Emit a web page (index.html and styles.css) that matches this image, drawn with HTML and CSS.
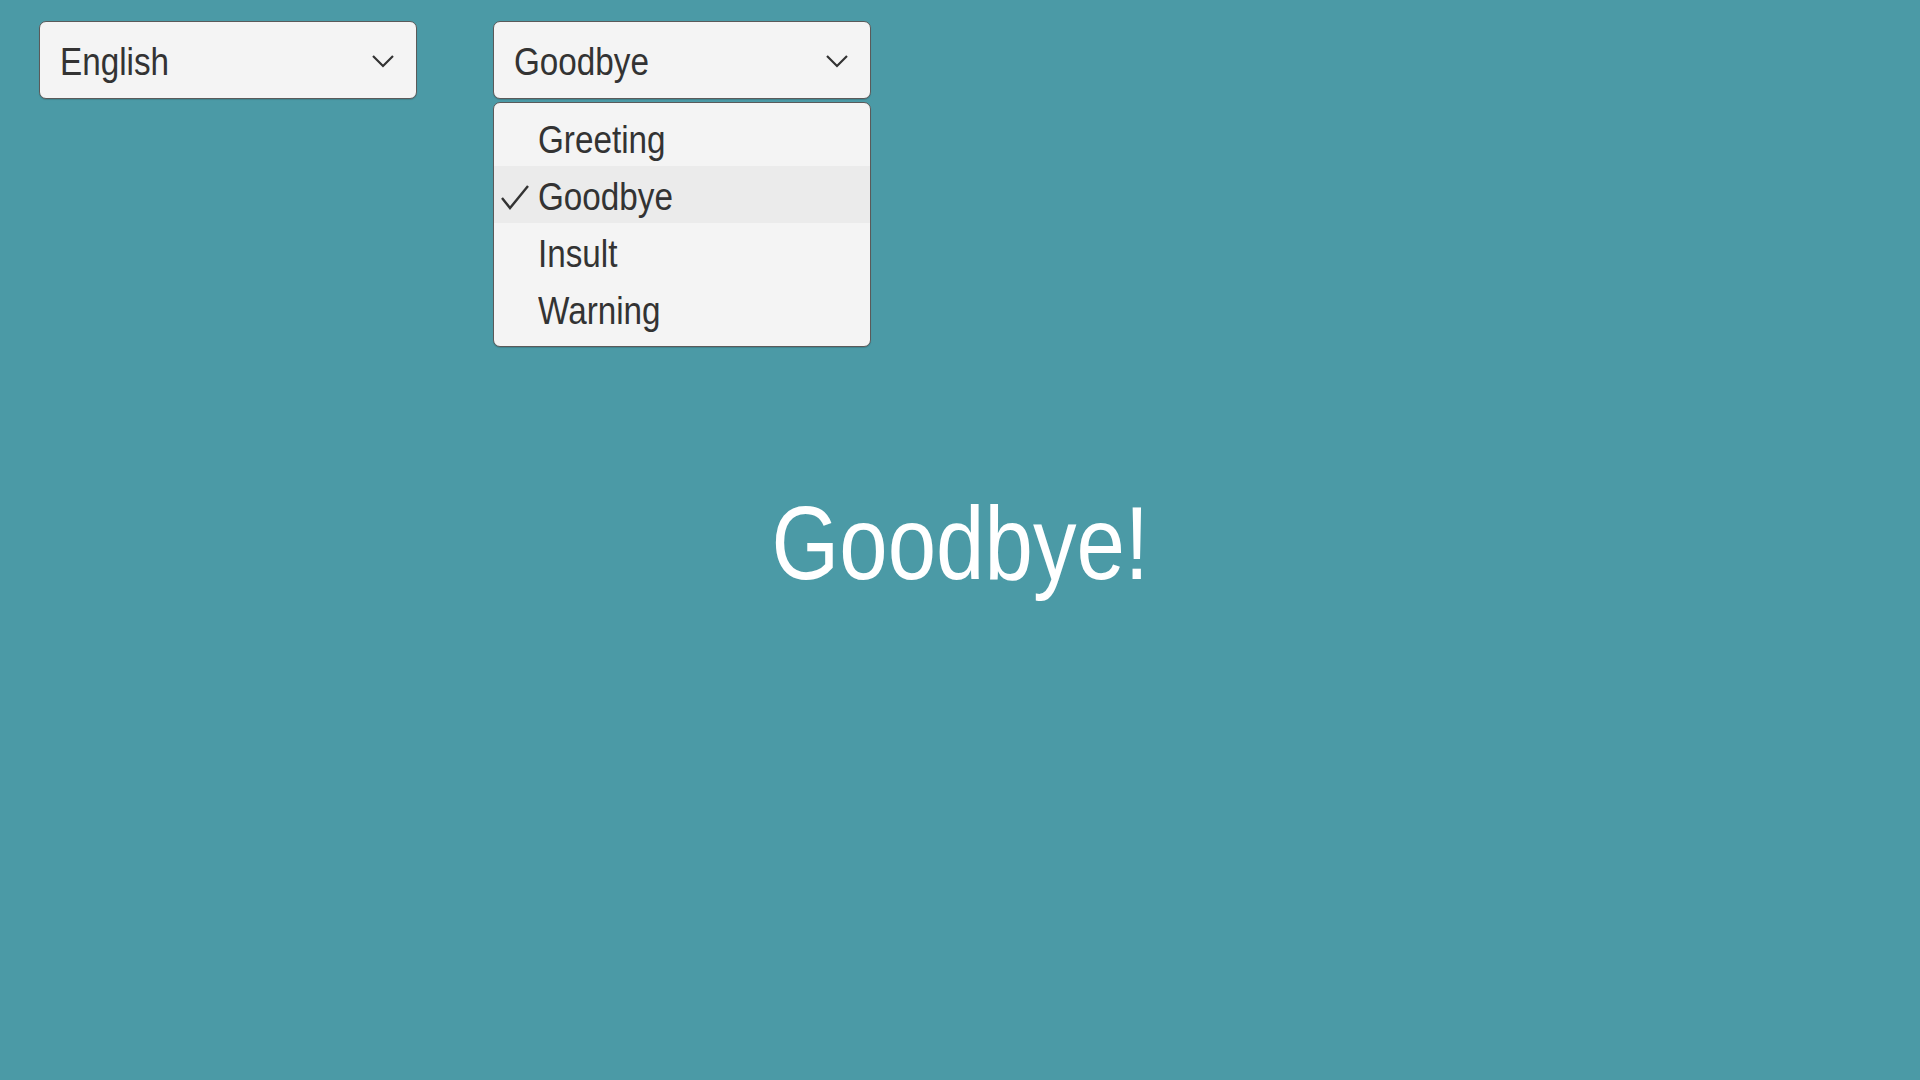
FILE: index.html
```html
<!DOCTYPE html>
<html lang="en">
<head>
<meta charset="utf-8">
<title>Phrases</title>
<link rel="stylesheet" href="styles.css">
</head>
<body>
<div class="stage">
  <header class="controls">
    <div class="select">
      <span class="select-value">English</span>
      <svg class="chevron" width="24" height="16" viewBox="0 0 24 16"><path d="M2 3 L12 13 L22 3" fill="none" stroke="#333" stroke-width="2.2"/></svg>
    </div>
    <div class="select-wrap">
      <div class="select">
        <span class="select-value">Goodbye</span>
        <svg class="chevron" width="24" height="16" viewBox="0 0 24 16"><path d="M2 3 L12 13 L22 3" fill="none" stroke="#333" stroke-width="2.2"/></svg>
      </div>
      <ul class="menu">
        <li class="menu-item"><span class="check"></span><span class="label">Greeting</span></li>
        <li class="menu-item selected"><span class="check"><svg width="30" height="26" viewBox="0 0 30 26"><path d="M2 13 L10 23 L28 1" fill="none" stroke="#333" stroke-width="2.4"/></svg></span><span class="label">Goodbye</span></li>
        <li class="menu-item"><span class="check"></span><span class="label">Insult</span></li>
        <li class="menu-item"><span class="check"></span><span class="label">Warning</span></li>
      </ul>
    </div>
  </header>
  <main class="message">
    <p class="phrase">Goodbye!</p>
  </main>
</div>
</body>
</html>
```
FILE: styles.css
```css
html, body {
  margin: 0;
  padding: 0;
}
body {
  background: #4b9aa6;
  font-family: "Liberation Sans", Arial, sans-serif;
  color: #333;
}
.stage {
  display: grid;
  width: 100vw;
  height: 100vh;
}
.controls, .message {
  grid-area: 1 / 1;
}
.controls {
  display: flex;
  align-items: flex-start;
  gap: 76px;
  padding: 21px 0 0 39px;
  z-index: 1;
}
.select-wrap {
  position: relative;
}
.select {
  box-sizing: border-box;
  width: 378px;
  height: 78px;
  background: #f4f4f4;
  border: 1px solid #5a5a5a;
  border-radius: 7px;
  display: flex;
  align-items: center;
  justify-content: space-between;
  padding: 4px 21px 0 20px;
  box-shadow: 0 1px 1px rgba(0,0,0,0.15);
}
.select-value,
.label {
  display: inline-block;
  font-size: 38px;
  color: #333;
  transform: scaleX(0.875);
  transform-origin: left center;
  white-space: nowrap;
}
.chevron {
  display: block;
  margin-top: -3px;
}
.menu {
  position: absolute;
  top: 81px;
  left: 0;
  box-sizing: border-box;
  width: 378px;
  margin: 0;
  padding: 6px 0 9px;
  list-style: none;
  background: #f4f4f4;
  border: 1px solid #5a5a5a;
  border-radius: 7px;
  box-shadow: 0 1px 1px rgba(0,0,0,0.15);
}
.menu-item {
  box-sizing: border-box;
  height: 57px;
  padding-top: 6px;
  display: flex;
  align-items: center;
}
.menu-item.selected {
  background: #ebebeb;
}
.check {
  width: 44px;
  display: flex;
  justify-content: flex-start;
  padding-left: 6px;
  box-sizing: border-box;
}
.check svg {
  display: block;
}
.message {
  display: flex;
  align-items: center;
  justify-content: center;
  padding-top: 8px;
}
.phrase {
  margin: 0;
  font-size: 103px;
  color: #ffffff;
  transform: scaleX(0.845);
}
```
